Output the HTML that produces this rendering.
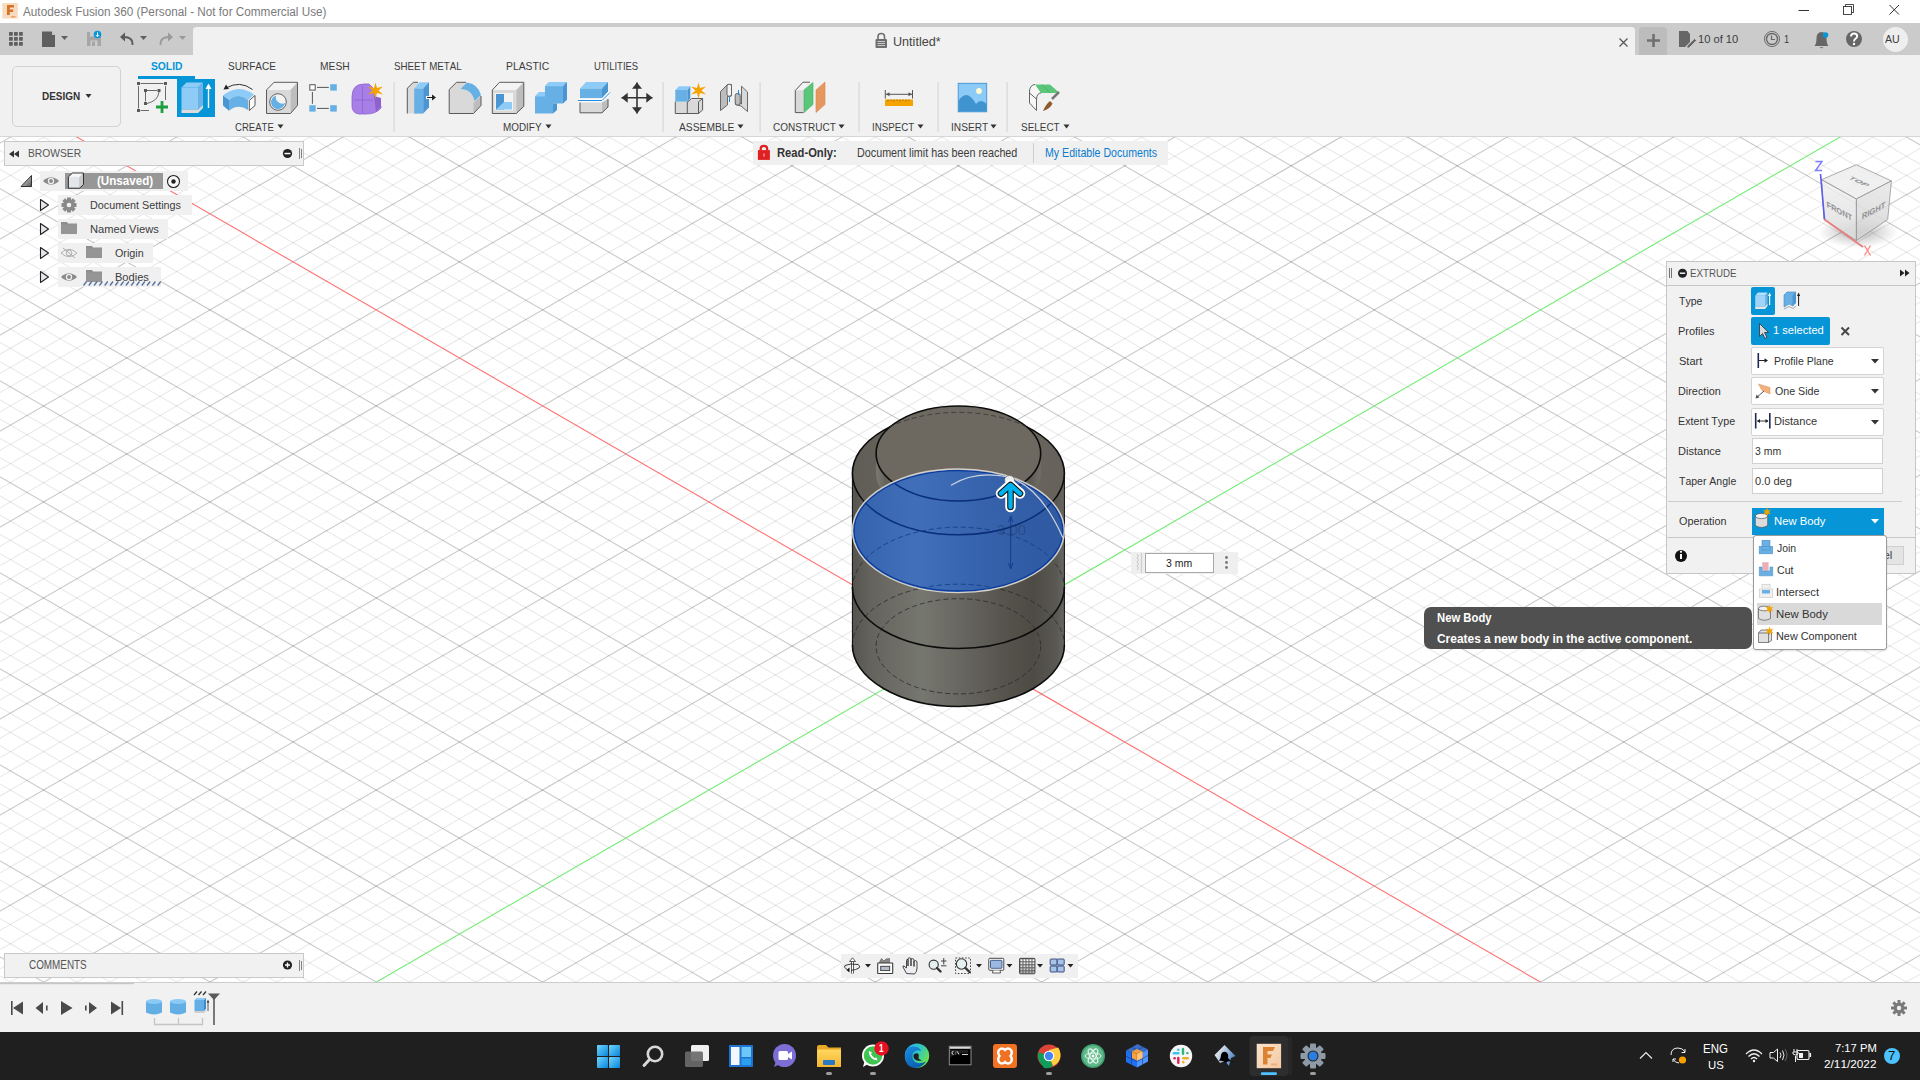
<!DOCTYPE html><html><head><meta charset="utf-8"><style>
*{margin:0;padding:0;box-sizing:border-box}
html,body{width:1920px;height:1080px;overflow:hidden;background:#fff;font-family:"Liberation Sans",sans-serif;font-kerning:none}
.abs{position:absolute}
.t{position:absolute;white-space:nowrap;line-height:1;transform-origin:0 0}
svg{position:absolute;overflow:visible}
</style></head><body><svg class="abs" style="left:0;top:137px" width="1920" height="845" viewBox="0 0 1920 845"><path d="M-2268.4 -28.8L1889.8 2372.0M-2251.7 -38.4L1906.5 2362.4M-2235.1 -48.0L1923.1 2352.8M-2218.5 -57.6L1939.7 2343.2M-2185.2 -76.8L1973.0 2324.0M-2168.6 -86.4L1989.6 2314.4M-2151.9 -96.0L2006.3 2304.8M-2135.3 -105.6L2022.9 2295.2M-2102.1 -124.8L2056.2 2276.0M-2085.4 -134.4L2072.8 2266.3M-2068.8 -144.0L2089.4 2256.7M-2052.2 -153.6L2106.1 2247.1M-2018.9 -172.8L2139.3 2227.9M-2002.3 -182.4L2156.0 2218.3M-1985.6 -192.0L2172.6 2208.7M-1969.0 -201.6L2189.2 2199.1M-1935.7 -220.8L2222.5 2179.9M-1919.1 -230.4L2239.1 2170.3M-1902.5 -240.0L2255.8 2160.7M-1885.8 -249.6L2272.4 2151.1M-1852.6 -268.8L2305.7 2131.9M-1835.9 -278.4L2322.3 2122.3M-1819.3 -288.0L2338.9 2112.7M-1802.7 -297.7L2355.6 2103.1M-1769.4 -316.9L2388.8 2083.9M-1752.8 -326.5L2405.5 2074.3M-1736.1 -336.1L2422.1 2064.7M-1719.5 -345.7L2438.7 2055.1M-1686.2 -364.9L2472.0 2035.9M-1669.6 -374.5L2488.6 2026.3M-1653.0 -384.1L2505.3 2016.7M-1636.3 -393.7L2521.9 2007.1M-1603.1 -412.9L2555.2 1987.9M-1586.4 -422.5L2571.8 1978.3M-1569.8 -432.1L2588.4 1968.7M-1553.2 -441.7L2605.1 1959.1M-1519.9 -460.9L2638.3 1939.8M-1503.3 -470.5L2655.0 1930.2M-1486.6 -480.1L2671.6 1920.6M-1470.0 -489.7L2688.2 1911.0M-1436.7 -508.9L2721.5 1891.8M-1420.1 -518.5L2738.1 1882.2M-1403.5 -528.1L2754.8 1872.6M-1386.8 -537.7L2771.4 1863.0M-1353.6 -556.9L2804.7 1843.8M-1336.9 -566.5L2821.3 1834.2M-1320.3 -576.1L2837.9 1824.6M-1303.7 -585.7L2854.5 1815.0M-1270.4 -604.9L2887.8 1795.8M-1253.8 -614.6L2904.4 1786.2M-1237.1 -624.2L2921.1 1776.6M-1220.5 -633.8L2937.7 1767.0M-1187.2 -653.0L2971.0 1747.8M-1170.6 -662.6L2987.6 1738.2M-1154.0 -672.2L3004.2 1728.6M-1137.3 -681.8L3020.9 1719.0M-1104.1 -701.0L3054.1 1699.8M-1087.4 -710.6L3070.8 1690.2M-1070.8 -720.2L3087.4 1680.6M-1054.2 -729.8L3104.0 1671.0M-1020.9 -749.0L3137.3 1651.8M-1004.3 -758.6L3153.9 1642.2M-987.6 -768.2L3170.6 1632.6M-971.0 -777.8L3187.2 1622.9M-937.7 -797.0L3220.5 1603.7M-921.1 -806.6L3237.1 1594.1M-904.5 -816.2L3253.7 1584.5M-887.9 -825.8L3270.4 1574.9M-854.6 -845.0L3303.6 1555.7M-838.0 -854.6L3320.3 1546.1M-821.3 -864.2L3336.9 1536.5M-804.7 -873.8L3353.5 1526.9M-771.4 -893.0L3386.8 1507.7M-754.8 -902.6L3403.4 1498.1M-738.2 -912.2L3420.1 1488.5M-721.5 -921.8L3436.7 1478.9M-688.3 -941.1L3470.0 1459.7M-671.6 -950.7L3486.6 1450.1M-655.0 -960.3L3503.2 1440.5M-638.4 -969.9L3519.9 1430.9M-605.1 -989.1L3553.1 1411.7M-588.5 -998.7L3569.8 1402.1M-571.8 -1008.3L3586.4 1392.5M-555.2 -1017.9L3603.0 1382.9M-521.9 -1037.1L3636.3 1363.7M-505.3 -1046.7L3652.9 1354.1M-488.7 -1056.3L3669.6 1344.5M-472.0 -1065.9L3686.2 1334.9M-438.8 -1085.1L3719.5 1315.7M-422.1 -1094.7L3736.1 1306.0M-405.5 -1104.3L3752.7 1296.4M-388.9 -1113.9L3769.4 1286.8M-355.6 -1133.1L3802.6 1267.6M-339.0 -1142.7L3819.3 1258.0M-322.3 -1152.3L3835.9 1248.4M-305.7 -1161.9L3852.5 1238.8M-272.4 -1181.1L3885.8 1219.6M-255.8 -1190.7L3902.4 1210.0M-239.2 -1200.3L3919.1 1200.4M-222.5 -1209.9L3935.7 1190.8M-189.3 -1229.1L3969.0 1171.6M-172.6 -1238.7L3985.6 1162.0M-156.0 -1248.3L4002.2 1152.4M-139.4 -1258.0L4018.9 1142.8M-106.1 -1277.2L4052.1 1123.6M-89.5 -1286.8L4068.7 1114.0M-72.8 -1296.4L4085.4 1104.4M-56.2 -1306.0L4102.0 1094.8M-22.9 -1325.2L4135.3 1075.6M-6.3 -1334.8L4151.9 1066.0M10.3 -1344.4L4168.5 1056.4M27.0 -1354.0L4185.2 1046.8" stroke="#000" stroke-opacity="0.085" stroke-width="1.1" fill="none"/><path d="M-2268.4 1046.8L1889.8 -1354.0M-2251.7 1056.4L1906.5 -1344.4M-2235.1 1066.0L1923.1 -1334.8M-2218.5 1075.6L1939.7 -1325.2M-2185.2 1094.8L1973.0 -1306.0M-2168.6 1104.4L1989.6 -1296.4M-2151.9 1114.0L2006.3 -1286.8M-2135.3 1123.6L2022.9 -1277.2M-2102.1 1142.8L2056.2 -1258.0M-2085.4 1152.4L2072.8 -1248.3M-2068.8 1162.0L2089.4 -1238.7M-2052.2 1171.6L2106.1 -1229.1M-2018.9 1190.8L2139.3 -1209.9M-2002.3 1200.4L2156.0 -1200.3M-1985.6 1210.0L2172.6 -1190.7M-1969.0 1219.6L2189.2 -1181.1M-1935.7 1238.8L2222.5 -1161.9M-1919.1 1248.4L2239.1 -1152.3M-1902.5 1258.0L2255.8 -1142.7M-1885.8 1267.6L2272.4 -1133.1M-1852.6 1286.8L2305.7 -1113.9M-1835.9 1296.4L2322.3 -1104.3M-1819.3 1306.0L2338.9 -1094.7M-1802.7 1315.7L2355.6 -1085.1M-1769.4 1334.9L2388.8 -1065.9M-1752.8 1344.5L2405.5 -1056.3M-1736.1 1354.1L2422.1 -1046.7M-1719.5 1363.7L2438.7 -1037.1M-1686.2 1382.9L2472.0 -1017.9M-1669.6 1392.5L2488.6 -1008.3M-1653.0 1402.1L2505.3 -998.7M-1636.3 1411.7L2521.9 -989.1M-1603.1 1430.9L2555.2 -969.9M-1586.4 1440.5L2571.8 -960.3M-1569.8 1450.1L2588.4 -950.7M-1553.2 1459.7L2605.1 -941.1M-1519.9 1478.9L2638.3 -921.8M-1503.3 1488.5L2655.0 -912.2M-1486.6 1498.1L2671.6 -902.6M-1470.0 1507.7L2688.2 -893.0M-1436.7 1526.9L2721.5 -873.8M-1420.1 1536.5L2738.1 -864.2M-1403.5 1546.1L2754.8 -854.6M-1386.8 1555.7L2771.4 -845.0M-1353.6 1574.9L2804.7 -825.8M-1336.9 1584.5L2821.3 -816.2M-1320.3 1594.1L2837.9 -806.6M-1303.7 1603.7L2854.5 -797.0M-1270.4 1622.9L2887.8 -777.8M-1253.8 1632.6L2904.4 -768.2M-1237.1 1642.2L2921.1 -758.6M-1220.5 1651.8L2937.7 -749.0M-1187.2 1671.0L2971.0 -729.8M-1170.6 1680.6L2987.6 -720.2M-1154.0 1690.2L3004.2 -710.6M-1137.3 1699.8L3020.9 -701.0M-1104.1 1719.0L3054.1 -681.8M-1087.4 1728.6L3070.8 -672.2M-1070.8 1738.2L3087.4 -662.6M-1054.2 1747.8L3104.0 -653.0M-1020.9 1767.0L3137.3 -633.8M-1004.3 1776.6L3153.9 -624.2M-987.6 1786.2L3170.6 -614.6M-971.0 1795.8L3187.2 -604.9M-937.7 1815.0L3220.5 -585.7M-921.1 1824.6L3237.1 -576.1M-904.5 1834.2L3253.7 -566.5M-887.9 1843.8L3270.4 -556.9M-854.6 1863.0L3303.6 -537.7M-838.0 1872.6L3320.3 -528.1M-821.3 1882.2L3336.9 -518.5M-804.7 1891.8L3353.5 -508.9M-771.4 1911.0L3386.8 -489.7M-754.8 1920.6L3403.4 -480.1M-738.2 1930.2L3420.1 -470.5M-721.5 1939.8L3436.7 -460.9M-688.3 1959.1L3470.0 -441.7M-671.6 1968.7L3486.6 -432.1M-655.0 1978.3L3503.2 -422.5M-638.4 1987.9L3519.9 -412.9M-605.1 2007.1L3553.1 -393.7M-588.5 2016.7L3569.8 -384.1M-571.8 2026.3L3586.4 -374.5M-555.2 2035.9L3603.0 -364.9M-521.9 2055.1L3636.3 -345.7M-505.3 2064.7L3652.9 -336.1M-488.7 2074.3L3669.6 -326.5M-472.0 2083.9L3686.2 -316.9M-438.8 2103.1L3719.5 -297.7M-422.1 2112.7L3736.1 -288.0M-405.5 2122.3L3752.7 -278.4M-388.9 2131.9L3769.4 -268.8M-355.6 2151.1L3802.6 -249.6M-339.0 2160.7L3819.3 -240.0M-322.3 2170.3L3835.9 -230.4M-305.7 2179.9L3852.5 -220.8M-272.4 2199.1L3885.8 -201.6M-255.8 2208.7L3902.4 -192.0M-239.2 2218.3L3919.1 -182.4M-222.5 2227.9L3935.7 -172.8M-189.3 2247.1L3969.0 -153.6M-172.6 2256.7L3985.6 -144.0M-156.0 2266.3L4002.2 -134.4M-139.4 2276.0L4018.9 -124.8M-106.1 2295.2L4052.1 -105.6M-89.5 2304.8L4068.7 -96.0M-72.8 2314.4L4085.4 -86.4M-56.2 2324.0L4102.0 -76.8M-22.9 2343.2L4135.3 -57.6M-6.3 2352.8L4151.9 -48.0M10.3 2362.4L4168.5 -38.4M27.0 2372.0L4185.2 -28.8" stroke="#000" stroke-opacity="0.085" stroke-width="1.1" fill="none"/><path d="M-2285.0 -19.2L1873.2 2381.6M-2201.8 -67.2L1956.4 2333.6M-2118.7 -115.2L2039.5 2285.6M-2035.5 -163.2L2122.7 2237.5M-1952.4 -211.2L2205.9 2189.5M-1869.2 -259.2L2289.0 2141.5M-1786.0 -307.3L2372.2 2093.5M-1702.9 -355.3L2455.4 2045.5M-1619.7 -403.3L2538.5 1997.5M-1536.5 -451.3L2621.7 1949.5M-1453.4 -499.3L2704.9 1901.4M-1370.2 -547.3L2788.0 1853.4M-1287.0 -595.3L2871.2 1805.4M-1203.9 -643.4L2954.3 1757.4M-1037.5 -739.4L3120.7 1661.4M-954.4 -787.4L3203.8 1613.3M-871.2 -835.4L3287.0 1565.3M-788.1 -883.4L3370.2 1517.3M-704.9 -931.5L3453.3 1469.3M-621.7 -979.5L3536.5 1421.3M-538.6 -1027.5L3619.7 1373.3M-455.4 -1075.5L3702.8 1325.3M-372.2 -1123.5L3786.0 1277.2M-289.1 -1171.5L3869.2 1229.2M-205.9 -1219.5L3952.3 1181.2M-122.7 -1267.6L4035.5 1133.2M-39.6 -1315.6L4118.6 1085.2M43.6 -1363.6L4201.8 1037.2" stroke="#000" stroke-opacity="0.215" stroke-width="1.1" fill="none"/><path d="M-2285.0 1037.2L1873.2 -1363.6M-2201.8 1085.2L1956.4 -1315.6M-2118.7 1133.2L2039.5 -1267.6M-2035.5 1181.2L2122.7 -1219.5M-1952.4 1229.2L2205.9 -1171.5M-1869.2 1277.2L2289.0 -1123.5M-1786.0 1325.3L2372.2 -1075.5M-1702.9 1373.3L2455.4 -1027.5M-1619.7 1421.3L2538.5 -979.5M-1536.5 1469.3L2621.7 -931.5M-1453.4 1517.3L2704.9 -883.4M-1370.2 1565.3L2788.0 -835.4M-1287.0 1613.3L2871.2 -787.4M-1203.9 1661.4L2954.3 -739.4M-1037.5 1757.4L3120.7 -643.4M-954.4 1805.4L3203.8 -595.3M-871.2 1853.4L3287.0 -547.3M-788.1 1901.4L3370.2 -499.3M-704.9 1949.5L3453.3 -451.3M-621.7 1997.5L3536.5 -403.3M-538.6 2045.5L3619.7 -355.3M-455.4 2093.5L3702.8 -307.3M-372.2 2141.5L3786.0 -259.2M-289.1 2189.5L3869.2 -211.2M-205.9 2237.5L3952.3 -163.2M-122.7 2285.6L4035.5 -115.2M-39.6 2333.6L4118.6 -67.2M43.6 2381.6L4201.8 -19.2" stroke="#000" stroke-opacity="0.215" stroke-width="1.1" fill="none"/><path d="M-1120.7 -691.4L3037.5 1709.4" stroke="#ff7070" stroke-width="1.1" fill="none"/><path d="M-1120.7 1709.4L3037.5 -691.4" stroke="#72ec72" stroke-width="1.1" fill="none"/></svg><div class="abs" style="left:0;top:0;width:1920px;height:23px;background:#fff"></div><div class="t" style="left:22.98px;top:5.22px;font-size:13.08px;font-weight:400;color:#7a7a7a;transform:scaleX(0.898);">Autodesk Fusion 360 (Personal - Not for Commercial Use)</div><div class="abs" style="left:0;top:23px;width:1920px;height:32px;background:#cbcbcb"></div><div class="abs" style="left:193px;top:27px;width:1442px;height:28px;background:#f1f1f1;border-radius:3.5px 3.5px 0 0"></div><div class="abs" style="left:1639px;top:27px;width:28px;height:28px;background:#bcbcbc;border-radius:4px 4px 0 0"></div><div class="t" style="left:893.03px;top:36.35px;font-size:12.94px;font-weight:400;color:#444;transform:scaleX(0.973);">Untitled*</div><div class="t" style="left:1698.15px;top:33.70px;font-size:11.34px;font-weight:400;color:#3c3c3c;transform:scaleX(0.983);">10 of 10</div><div class="t" style="left:1784.29px;top:33.70px;font-size:11.34px;font-weight:400;color:#3c3c3c;transform:scaleX(0.818);">1</div><div class="abs" style="left:1882.5px;top:26.5px;width:25px;height:25px;border-radius:50%;background:#eeeeee"></div><div class="t" style="left:1885.28px;top:33.70px;font-size:11.34px;font-weight:400;color:#3c3c3c;transform:scaleX(0.936);">AU</div><div class="abs" style="left:0;top:55px;width:1920px;height:82px;background:#f1f1f1;border-bottom:1px solid #d6d6d6"></div><div class="abs" style="left:12px;top:65.5px;width:109px;height:61px;border:1px solid #d2d2d2;border-radius:5px"></div><div class="t" style="left:41.73px;top:91.07px;font-size:10.90px;font-weight:700;color:#333;transform:scaleX(0.915);">DESIGN</div><div class="t" style="left:150.95px;top:60.58px;font-size:11.48px;font-weight:700;color:#0696d7;transform:scaleX(0.897);">SOLID</div><div class="t" style="left:227.54px;top:60.58px;font-size:11.48px;font-weight:400;color:#3c3c3c;transform:scaleX(0.873);">SURFACE</div><div class="t" style="left:320.16px;top:60.58px;font-size:11.48px;font-weight:400;color:#3c3c3c;transform:scaleX(0.895);">MESH</div><div class="t" style="left:393.56px;top:60.58px;font-size:11.48px;font-weight:400;color:#3c3c3c;transform:scaleX(0.850);">SHEET METAL</div><div class="t" style="left:506.15px;top:60.58px;font-size:11.48px;font-weight:400;color:#3c3c3c;transform:scaleX(0.904);">PLASTIC</div><div class="t" style="left:594.27px;top:60.58px;font-size:11.48px;font-weight:400;color:#3c3c3c;transform:scaleX(0.824);">UTILITIES</div><div class="abs" style="left:138px;top:76px;width:57px;height:3px;background:#0696d7"></div><div class="t" style="left:235.01px;top:121.95px;font-size:11.05px;font-weight:400;color:#3c3c3c;transform:scaleX(0.866);">CREATE</div><div class="t" style="left:502.69px;top:121.95px;font-size:11.05px;font-weight:400;color:#3c3c3c;transform:scaleX(0.897);">MODIFY</div><div class="t" style="left:678.98px;top:121.95px;font-size:11.05px;font-weight:400;color:#3c3c3c;transform:scaleX(0.931);">ASSEMBLE</div><div class="t" style="left:773.49px;top:121.95px;font-size:11.05px;font-weight:400;color:#3c3c3c;transform:scaleX(0.905);">CONSTRUCT</div><div class="t" style="left:872.10px;top:121.95px;font-size:11.05px;font-weight:400;color:#3c3c3c;transform:scaleX(0.880);">INSPECT</div><div class="t" style="left:951.06px;top:121.95px;font-size:11.05px;font-weight:400;color:#3c3c3c;transform:scaleX(0.918);">INSERT</div><div class="t" style="left:1020.55px;top:121.95px;font-size:11.05px;font-weight:400;color:#3c3c3c;transform:scaleX(0.900);">SELECT</div><div class="abs" style="left:0;top:982px;width:1920px;height:50px;background:#f1f1f1;border-top:1px solid #cdcdcd"></div><div class="abs" style="left:0;top:1032px;width:1920px;height:48px;background:#1f1f1f"></div><div class="t" style="left:1703.46px;top:1043.09px;font-size:12.06px;font-weight:400;color:#fff;transform:scaleX(0.953);">ENG</div><div class="t" style="left:1707.72px;top:1059.33px;font-size:11.77px;font-weight:400;color:#fff;transform:scaleX(0.966);">US</div><div class="t" style="left:1835.42px;top:1042.58px;font-size:11.48px;font-weight:400;color:#fff;transform:scaleX(0.977);">7:17 PM</div><div class="t" style="left:1824.41px;top:1058.33px;font-size:11.77px;font-weight:400;color:#fff;transform:scaleX(1.002);">2/11/2022</div><div class="abs" style="left:4px;top:141px;width:300px;height:25px;background:#f1f1f1;border:1px solid #c9c9c9"></div><div class="t" style="left:28.36px;top:147.45px;font-size:11.63px;font-weight:400;color:#555;transform:scaleX(0.884);">BROWSER</div><svg style="left:0;top:0" width="1" height="1"><path d="M9 154l5-3.5v7zM14 154l5-3.5v7z" fill="#333"/><circle cx="287.5" cy="153.5" r="4.6" fill="#222"/><rect x="284.5" y="152.8" width="6" height="1.5" fill="#fff"/><path d="M299.5 148v11M301.5 149v9" stroke="#666" stroke-width="0.8"/></svg><div class="abs" style="left:40px;top:171px;width:148px;height:20px;background:#f0f0f0"></div><div class="abs" style="left:65px;top:173px;width:98px;height:16px;background:#979797"></div><div class="t" style="left:97.42px;top:174.84px;font-size:12.35px;font-weight:700;color:#fff;transform:scaleX(0.940);">(Unsaved)</div><div class="abs" style="left:58px;top:195px;width:134px;height:20px;background:#f0f0f0"></div><div class="abs" style="left:58px;top:219px;width:110px;height:20px;background:#f0f0f0"></div><div class="abs" style="left:58px;top:243px;width:95px;height:20px;background:#f0f0f0"></div><div class="abs" style="left:58px;top:267px;width:103px;height:20px;background:#f0f0f0"></div><div class="t" style="left:89.92px;top:199.45px;font-size:11.63px;font-weight:400;color:#3c3c3c;transform:scaleX(0.926);">Document Settings</div><div class="t" style="left:90.38px;top:223.45px;font-size:11.63px;font-weight:400;color:#3c3c3c;transform:scaleX(0.959);">Named Views</div><div class="t" style="left:115.49px;top:247.45px;font-size:11.63px;font-weight:400;color:#3c3c3c;transform:scaleX(0.926);">Origin</div><div class="t" style="left:115.09px;top:271.45px;font-size:11.63px;font-weight:400;color:#3c3c3c;transform:scaleX(0.951);">Bodies</div><div class="abs" style="left:4px;top:953px;width:300px;height:25px;background:#f1f1f1;border:1px solid #c9c9c9"></div><div class="t" style="left:28.80px;top:958.96px;font-size:12.21px;font-weight:400;color:#555;transform:scaleX(0.810);">COMMENTS</div><svg style="left:0;top:0" width="1" height="1"><circle cx="287.5" cy="965" r="4.6" fill="#222"/><path d="M285 965h5M287.5 962.5v5" stroke="#fff" stroke-width="1.4"/><path d="M299.5 960v11M301.5 961v9" stroke="#666" stroke-width="0.8"/></svg><div class="abs" style="left:753px;top:141px;width:415px;height:24px;background:#f0f0f0"></div><div class="abs" style="left:1032.5px;top:143px;width:1px;height:20px;background:#cfcfcf"></div><div class="t" style="left:777.25px;top:146.84px;font-size:12.35px;font-weight:700;color:#333;transform:scaleX(0.908);">Read-Only:</div><div class="t" style="left:857.12px;top:146.84px;font-size:12.35px;font-weight:400;color:#3c3c3c;transform:scaleX(0.872);">Document limit has been reached</div><div class="t" style="left:1045.13px;top:146.84px;font-size:12.35px;font-weight:400;color:#0a7ccf;transform:scaleX(0.860);">My Editable Documents</div><div class="abs" style="left:1666px;top:261px;width:250px;height:313px;background:#f1f1f1;border:1px solid #c6c6c6"></div><div class="abs" style="left:1667px;top:285px;width:248px;height:1px;background:#c6c6c6"></div><div class="t" style="left:1690.30px;top:267.70px;font-size:11.34px;font-weight:400;color:#555;transform:scaleX(0.857);">EXTRUDE</div><div class="t" style="left:1678.96px;top:295.82px;font-size:11.19px;font-weight:400;color:#333;transform:scaleX(0.941);">Type</div><div class="t" style="left:1678.30px;top:325.70px;font-size:11.34px;font-weight:400;color:#333;transform:scaleX(0.968);">Profiles</div><div class="t" style="left:1678.70px;top:355.58px;font-size:11.48px;font-weight:400;color:#333;transform:scaleX(0.964);">Start</div><div class="t" style="left:1678.31px;top:385.45px;font-size:11.63px;font-weight:400;color:#333;transform:scaleX(0.933);">Direction</div><div class="t" style="left:1678.32px;top:415.33px;font-size:11.77px;font-weight:400;color:#333;transform:scaleX(0.910);">Extent Type</div><div class="t" style="left:1678.29px;top:445.45px;font-size:11.63px;font-weight:400;color:#333;transform:scaleX(0.950);">Distance</div><div class="t" style="left:1678.96px;top:475.33px;font-size:11.77px;font-weight:400;color:#333;transform:scaleX(0.893);">Taper Angle</div><div class="t" style="left:1678.69px;top:515.45px;font-size:11.63px;font-weight:400;color:#333;transform:scaleX(0.930);">Operation</div><div class="abs" style="left:1751px;top:287px;width:24px;height:28px;background:#0696d7;border-radius:2px"></div><div class="abs" style="left:1751px;top:317px;width:79px;height:28px;background:#0696d7;border-radius:2px"></div><div class="t" style="left:1772.95px;top:324.45px;font-size:11.63px;font-weight:400;color:#fff;transform:scaleX(0.958);">1 selected</div><div class="abs" style="left:1751px;top:347px;width:133px;height:28px;background:#fff;border:1px solid #d4d4d4;border-radius:2px"></div><svg style="left:0;top:0" width="1" height="1"><path d="M1871 359h8l-4 4.5z" fill="#333"/></svg><div class="abs" style="left:1751px;top:377px;width:133px;height:28px;background:#fff;border:1px solid #d4d4d4;border-radius:2px"></div><svg style="left:0;top:0" width="1" height="1"><path d="M1871 389h8l-4 4.5z" fill="#333"/></svg><div class="abs" style="left:1751px;top:408px;width:133px;height:28px;background:#fff;border:1px solid #d4d4d4;border-radius:2px"></div><svg style="left:0;top:0" width="1" height="1"><path d="M1871 420h8l-4 4.5z" fill="#333"/></svg><div class="abs" style="left:1752px;top:438px;width:131px;height:26px;background:#fff;border:1px solid #d0d0d0"></div><div class="abs" style="left:1752px;top:468px;width:131px;height:26px;background:#fff;border:1px solid #d0d0d0"></div><div class="t" style="left:1774.44px;top:355.58px;font-size:11.48px;font-weight:400;color:#333;transform:scaleX(0.916);">Profile Plane</div><div class="t" style="left:1774.79px;top:385.45px;font-size:11.63px;font-weight:400;color:#333;transform:scaleX(0.917);">One Side</div><div class="t" style="left:1774.09px;top:415.33px;font-size:11.77px;font-weight:400;color:#333;transform:scaleX(0.941);">Distance</div><div class="t" style="left:1754.60px;top:445.45px;font-size:11.63px;font-weight:400;color:#333;transform:scaleX(0.897);">3 mm</div><div class="t" style="left:1754.57px;top:475.33px;font-size:11.77px;font-weight:400;color:#333;transform:scaleX(0.941);">0.0 deg</div><div class="abs" style="left:1668px;top:501px;width:234px;height:1px;background:#cdcdcd"></div><div class="abs" style="left:1751.5px;top:507.5px;width:132px;height:27px;background:#0696d7"></div><div class="t" style="left:1774.37px;top:515.45px;font-size:11.63px;font-weight:400;color:#fff;transform:scaleX(0.971);">New Body</div><svg style="left:0;top:0" width="1" height="1"><path d="M1871 519h8l-4 4.5z" fill="#fff"/></svg><div class="abs" style="left:1667px;top:537px;width:248px;height:1px;background:#c9c9c9"></div><div class="abs" style="left:1840px;top:546px;width:64px;height:19px;background:#e4e4e4;border:1px solid #cfcfcf"></div><div class="t" style="left:1857.42px;top:549.45px;font-size:11.63px;font-weight:400;color:#444;transform:scaleX(0.976);">Cancel</div><svg style="left:0;top:0" width="1" height="1"><circle cx="1681" cy="556" r="6" fill="#111"/><rect x="1680" y="554" width="2" height="5" fill="#fff"/><circle cx="1681" cy="551.8" r="1.1" fill="#fff"/></svg><div class="abs" style="left:1752.5px;top:534.5px;width:134px;height:115px;background:#fff;border:1px solid #9a9a9a;border-radius:3px;box-shadow:0 1px 2px rgba(0,0,0,0.12)"></div><div class="abs" style="left:1757px;top:603px;width:125px;height:22px;background:#d9d9d9"></div><div class="t" style="left:1776.94px;top:542.45px;font-size:11.63px;font-weight:400;color:#333;transform:scaleX(0.897);">Join</div><div class="t" style="left:1776.56px;top:564.45px;font-size:11.63px;font-weight:400;color:#333;transform:scaleX(0.913);">Cut</div><div class="t" style="left:1776.06px;top:586.45px;font-size:11.63px;font-weight:400;color:#333;transform:scaleX(0.965);">Intersect</div><div class="t" style="left:1776.17px;top:608.45px;font-size:11.63px;font-weight:400;color:#333;transform:scaleX(0.978);">New Body</div><div class="t" style="left:1776.21px;top:630.45px;font-size:11.63px;font-weight:400;color:#333;transform:scaleX(0.934);">New Component</div><div class="abs" style="left:1424px;top:607px;width:328px;height:42px;background:#505050;border-radius:7px"></div><div class="t" style="left:1437.14px;top:611.84px;font-size:12.35px;font-weight:700;color:#fff;transform:scaleX(0.915);">New Body</div><div class="t" style="left:1437.41px;top:632.72px;font-size:12.50px;font-weight:700;color:#fff;transform:scaleX(0.955);">Creates a new body in the active component.</div><div class="abs" style="left:1131px;top:552px;width:107px;height:21.5px;background:#efefef"></div><div class="abs" style="left:1145px;top:553px;width:69px;height:20px;background:#fff;border:1px solid #a9a9a9"></div><div class="t" style="left:1165.60px;top:557.82px;font-size:11.19px;font-weight:400;color:#222;transform:scaleX(0.936);">3 mm</div><svg style="left:0;top:0" width="1" height="1"><circle cx="1226.5" cy="557.5" r="1.4" fill="#777"/><circle cx="1226.5" cy="562.5" r="1.4" fill="#777"/><circle cx="1226.5" cy="567.5" r="1.4" fill="#777"/><path d="M1141.5 553v20" stroke="#d0d0d0" stroke-width="1.5"/><path d="M1137 554l1.5 2-1.5 2 1.5 2-1.5 2 1.5 2-1.5 2 1.5 2-1.5 2" stroke="#aaa" stroke-width="0.6" fill="none"/></svg><div class="abs" style="left:841px;top:954px;width:237px;height:23.5px;background:#f0f0f0"></div><svg style="left:0;top:0" width="1920" height="1080" viewBox="0 0 1920 1080"><defs><linearGradient id="side" x1="852" x2="1065" y1="0" y2="0" gradientUnits="userSpaceOnUse"><stop offset="0" stop-color="#55534d"/><stop offset="0.08" stop-color="#64625c"/><stop offset="0.33" stop-color="#76776f"/><stop offset="0.52" stop-color="#67655f"/><stop offset="0.72" stop-color="#56534d"/><stop offset="0.85" stop-color="#4e4b45"/><stop offset="0.96" stop-color="#5a5852"/><stop offset="1" stop-color="#6a6862"/></linearGradient><linearGradient id="blue" x1="852" x2="1065" y1="0" y2="0" gradientUnits="userSpaceOnUse"><stop offset="0" stop-color="#3063b6"/><stop offset="0.3" stop-color="#3c6fc2"/><stop offset="0.6" stop-color="#3163b5"/><stop offset="1" stop-color="#2a5aab"/></linearGradient><linearGradient id="topf" x1="852" x2="1065" y1="0" y2="0" gradientUnits="userSpaceOnUse"><stop offset="0" stop-color="#605d56"/><stop offset="0.5" stop-color="#6e6a62"/><stop offset="1" stop-color="#66625b"/></linearGradient><linearGradient id="wall" x1="876" x2="1041" y1="0" y2="0" gradientUnits="userSpaceOnUse"><stop offset="0" stop-color="#7c7a72"/><stop offset="0.06" stop-color="#66635c"/><stop offset="0.5" stop-color="#6d6961"/><stop offset="0.94" stop-color="#5e5b55"/><stop offset="1" stop-color="#747069"/></linearGradient></defs><path d="M852.4 473.6V645A106.0 61.5 0 0 0 1064.4 645V473.6Z" fill="url(#side)"/><ellipse cx="958.4" cy="473.6" rx="106.0" ry="61.2" fill="url(#topf)"/><path d="M876.1 453.5V473.6A82.3 47.5 0 0 0 1040.7 473.6V453.5Z" fill="url(#wall)"/><g fill="none" stroke="#2a2a2a" stroke-width="0.8" stroke-dasharray="5 3"><ellipse cx="958.4" cy="646.3" rx="82.3" ry="47.6"/><path d="M852.4 645.5A106.0 61.3 0 0 1 1064.4 645.5"/><path d="M852.4 588.5A106.0 61.3 0 0 1 1064.4 588.5"/></g><g fill="none" stroke="#0c0c0c" stroke-width="1.6"><path d="M852.4 645A106.0 61.5 0 0 0 1064.4 645"/><path d="M852.4 587A106.0 61.5 0 0 0 1064.4 587"/><path d="M852.4 473.6V645M1064.4 473.6V645" stroke-width="1"/><ellipse cx="958.4" cy="473.6" rx="106.0" ry="61.2"/></g><ellipse cx="958.4" cy="453.5" rx="82.3" ry="47.5" fill="#6d6961" stroke="#0c0c0c" stroke-width="1.6"/><path d="M889.4 427.1A106.0 61.2 0 0 1 1027.4 427.1" fill="none" stroke="#333" stroke-width="0.8" stroke-dasharray="5 3"/><clipPath id="bclip"><ellipse cx="958.4" cy="530.8" rx="105.2" ry="61"/></clipPath><ellipse cx="958.4" cy="530.8" rx="106.0" ry="61.8" fill="url(#blue)" fill-opacity="0.9"/><g clip-path="url(#bclip)" fill="none"><path d="M852.4 473.6A106.0 61.2 0 0 0 1064.4 473.6" stroke="#0a2f78" stroke-width="1.5"/><path d="M876.1 453.5A82.3 47.5 0 0 0 1040.7 453.5" stroke="#0a2f78" stroke-width="1.5"/><path d="M852.4 588.5A106.0 61.3 0 0 1 1064.4 588.5" stroke="#143e88" stroke-width="0.8" stroke-dasharray="5 3"/><path d="M852.4 645.5A106.0 61.3 0 0 1 1064.4 645.5" stroke="#143e88" stroke-width="0.8" stroke-dasharray="5 3"/><ellipse cx="958.4" cy="530.8" rx="104.4" ry="60.2" stroke="#0b3c9c" stroke-width="1.3"/></g><ellipse cx="958.4" cy="530.8" rx="106.0" ry="61.8" fill="none" stroke="#d6d0c8" stroke-width="1.4"/><path d="M951 485.3Q975 470 1008 477Q1040 486 1063 538" fill="none" stroke="#e8e8e8" stroke-width="1.2" opacity="0.85"/><path d="M1010.7 516V569M1008.5 522l2.2-6 2.2 6M1008.5 563l2.2 6 2.2-6" fill="none" stroke="#0e3a8a" stroke-width="0.9"/></svg><div class="t" style="left:996.83px;top:522.75px;font-size:14.83px;font-weight:400;color:rgba(30,55,100,0.45);transform:scaleX(1.003);">3.00</div><svg style="left:0;top:0" width="1" height="1"><ellipse cx="1009.5" cy="480" rx="5" ry="4.5" fill="#ececec" stroke="#555" stroke-width="0.6"/><path d="M1001 493.5L1010.5 485L1020 493.5M1010.5 486V507" fill="none" stroke="#fff" stroke-width="10.5" stroke-linecap="round" stroke-linejoin="round"/><path d="M1001 493.5L1010.5 485L1020 493.5M1010.5 486V507" fill="none" stroke="#111" stroke-width="6.6" stroke-linecap="round" stroke-linejoin="round"/><path d="M1001 493.5L1010.5 485L1020 493.5M1010.5 486V507" fill="none" stroke="#00b1ee" stroke-width="4.4" stroke-linecap="round" stroke-linejoin="round"/></svg><svg style="left:0;top:0" width="1" height="1"><rect x="393.5" y="82" width="1.2" height="50" fill="#d8d8d8"/><rect x="662.5" y="82" width="1.2" height="50" fill="#d8d8d8"/><rect x="759.5" y="82" width="1.2" height="50" fill="#d8d8d8"/><rect x="858.5" y="82" width="1.2" height="50" fill="#d8d8d8"/><rect x="937.5" y="82" width="1.2" height="50" fill="#d8d8d8"/><rect x="1006.5" y="82" width="1.2" height="50" fill="#d8d8d8"/><g fill="#5a5a5a"><rect x="137" y="82" width="3" height="3"/><rect x="164" y="82" width="3" height="3"/><rect x="137" y="109" width="3" height="3"/><rect x="144" y="89" width="3" height="3"/><rect x="157.5" y="89" width="3" height="3"/><rect x="144" y="102" width="3" height="3"/></g><path d="M140.5 83.5H163.5M138.5 86V108.5M140.5 110.5H149M165.5 86V100M147 90.5H157M145.5 92V101.5M159 92Q158 101 147 103.5" fill="none" stroke="#5a5a5a" stroke-width="0.9"/><path d="M162 101V113M156 107H168" stroke="#1f9e3f" stroke-width="2.8"/><rect x="177" y="79" width="38" height="38" fill="#0696d7"/><path d="M181.5 87.5L186.5 82.5H203L198 87.5Z" fill="#8ecbf6"/><rect x="181.5" y="87.5" width="16.5" height="22" fill="#8ecbf6"/><path d="M198 87.5L203 82.5V105L198 109.5Z" fill="#6bb2e6"/><path d="M181.5 109.5H198L203 105V108L198 113H181.5Z" fill="#dcdcdc"/><path d="M208.5 108V85" stroke="#fff" stroke-width="1.4"/><path d="M205.5 89L208.5 83.5L211.5 89Z" fill="#fff"/><path d="M252.5 89.5Q240 80 226 88" fill="none" stroke="#333" stroke-width="1"/><path d="M223.5 89.5L226 84.5L229 89Z" fill="#222"/><path d="M223 95.5Q238 83 254 94.5L248 100Q238 92 229 100Z" fill="#8ecbf6"/><path d="M229 100Q238 92 248 100V110Q238 103 229 110.8Z" fill="#67b0e5"/><path d="M223 95.5L229 100V110.8L223 105.5Z" fill="#4a95d2"/><path d="M249.3 100.5L255 95.5V105.5L249.3 110.5Z" fill="#fff" stroke="#444" stroke-width="0.9"/><path d="M266.5 90L274 82.3H297.5L290.5 90Z" fill="#f3f3f3"/><rect x="266.5" y="90" width="24" height="23.5" fill="#d9d9d9"/><path d="M290.5 90L297.5 82.3V105.5L290.5 113.5Z" fill="#bdbdbd"/><path d="M266.5 113.5V90L274 82.3H297.5V105.5L290.5 113.5Z" fill="none" stroke="#5a5a5a" stroke-width="1"/><circle cx="278" cy="102" r="8.3" fill="#f3f3f3" stroke="#555" stroke-width="0.9"/><path d="M276 95.5A7 7 0 1 0 285 103A6.5 6.5 0 0 1 276 95.5Z" fill="#67b0e5"/><rect x="309.8" y="84.7" width="5.4" height="5.4" fill="#fff" stroke="#555" stroke-width="1"/><g fill="#67b0e5"><rect x="330.2" y="84.2" width="6.6" height="6.4"/><rect x="309.3" y="105.2" width="6.4" height="6.4"/><rect x="330.2" y="105.2" width="6.6" height="6.4"/></g><path d="M317 87.4H328.8M312.4 92V103.8M317 108.4H328.8" stroke="#555" stroke-width="1"/><path d="M352 97Q352 84 364 84H369L375 90V100Q382 105 381 108Q376 114 366 114H359Q352 113 352 106Z" fill="#a87fe6" stroke="#8e62cc" stroke-width="0.8"/><path d="M354 100H373M362.5 86V113" stroke="#8a5fc8" stroke-width="0.7"/><path d="M374 96L381 98V106L376 112Z" fill="#8e62cc"/><path d="M375.5 82.5L377 88L383 86.5L378.5 90.5L383 94.5L377 93L375.5 98.5L374 93L368 94.5L372.5 90.5L368 86.5L374 88Z" fill="#f5a300"/><path d="M407.3 113.5V88.2L413.4 82.3H418V113.5Z" fill="#d9d9d9"/><path d="M407.3 113.5V88.2L413.4 82.3H418" fill="none" stroke="#5a5a5a" stroke-width="1"/><path d="M414.2 88.5L419.6 82.3H429L423.2 88.5Z" fill="#8ecbf6"/><rect x="414.2" y="88.5" width="9" height="25.1" fill="#67b0e5"/><path d="M423.2 88.5L429 82.3V107.3L423.2 113.6Z" fill="#4a95d2"/><path d="M426 97.5H433" stroke="#fff" stroke-width="3"/><path d="M427 97.5H433" stroke="#222" stroke-width="1.1"/><path d="M432 94.5L436 97.5L432 100.5Z" fill="#222"/><path d="M449.2 113.5V89.5L456.6 82.3H466L481 95.5V105.5L473.5 113.5Z" fill="#d9d9d9"/><path d="M473.5 113.5L481 105.5V96L473.5 103Z" fill="#bdbdbd"/><path d="M460.5 89Q472 89 474.5 101L481 95Q478 84 467 82.5Z" fill="#67b0e5"/><path d="M449.2 113.5V89.5L456.6 82.3H466M473.5 113.5L481 105.5V96M449.2 113.5H473.5" fill="none" stroke="#5a5a5a" stroke-width="1"/><path d="M492.3 90L499.5 82.3H523.8L516.3 90Z" fill="#f3f3f3"/><rect x="492.3" y="90" width="24" height="23.5" fill="#d9d9d9"/><path d="M516.3 90L523.8 82.3V106.3L516.3 113.5Z" fill="#bdbdbd"/><path d="M492.3 113.5V90L499.5 82.3H523.8V106.3L516.3 113.5Z" fill="none" stroke="#5a5a5a" stroke-width="1"/><rect x="494.5" y="93" width="18.5" height="17.5" fill="#f3f3f3"/><rect x="496" y="94" width="8" height="15.5" fill="#4a95d2"/><path d="M496 109.5L504 102H512V109.5Z" fill="#8ecbf6"/><path d="M535 96.5L539 92.2H545V86.2L549 82H567L563 86.2V103.6H553V113.6H535Z" fill="#67b0e5"/><path d="M545 86.2L549 82H567L563 86.2Z" fill="#8ecbf6"/><path d="M535 96.5L539 92.2H545V96.5Z" fill="#8ecbf6"/><path d="M563 86.2L567 82V99.7L563 103.6Z" fill="#4a95d2"/><path d="M553 103.6H557V110L553 113.6Z" fill="#4a95d2"/><path d="M580 88.5L586 82H608L602 88.5Z" fill="#8ecbf6"/><rect x="580" y="88.5" width="22" height="9.5" fill="#67b0e5"/><path d="M602 88.5L608 82V91.5L602 98Z" fill="#4a95d2"/><path d="M578 100.5H602L610 92.5" fill="none" stroke="#fff" stroke-width="2.5"/><path d="M578 100.5H602L610 92.5" fill="none" stroke="#1e88e5" stroke-width="1"/><path d="M580 102.5H602V112.8H580Z" fill="#d9d9d9"/><path d="M602 102.5L608 99V107L602 112.8Z" fill="#bdbdbd"/><path d="M580 102.5V112.8H602L608 107V99" fill="none" stroke="#5a5a5a" stroke-width="1"/><path d="M621.5 97.7H652.5M637 82.5V113.5" stroke="#333" stroke-width="1.6"/><path d="M637 82.5L632 88.7H642ZM637 113.5L632 107.3H642ZM621.5 97.7L627.7 92.7V102.7ZM652.5 97.7L646.3 92.7V102.7Z" fill="#333"/><path d="M675.3 101.6V113.5H698.5L702.6 110V99.5H687.3V101.6Z" fill="#d9d9d9"/><path d="M675.3 101.6V113.5H698.5L702.6 110V98.5H691.5L687.3 102.3M687.3 101.6V113.5M698.5 113.5V101.8L702.6 98.5" fill="none" stroke="#5a5a5a" stroke-width="1"/><path d="M675.3 90L679 86.2H690.3L687.5 90Z" fill="#8ecbf6"/><rect x="675.3" y="90" width="12.2" height="11.6" fill="#67b0e5"/><path d="M687.5 90L690.3 86.2V98L687.5 101.6Z" fill="#4a95d2"/><path d="M698.5 82.5L700 88L706 86.5L701.5 90.5L706 94.5L700 93L698.5 98.5L697 93L691 94.5L695.5 90.5L691 86.5L697 88Z" fill="#f5a300"/><path d="M720.5 110.5V91.5L727.5 84.5H731.5V96L727.5 96.5V105Z" fill="#bdbdbd" stroke="#5a5a5a" stroke-width="0.9"/><rect x="727" y="84.2" width="4.5" height="12" rx="2" fill="#f3f3f3" stroke="#5a5a5a" stroke-width="0.9"/><path d="M747.5 111.5V92L741.5 86.2V104L735.5 100.5V104.5L741 106Z" fill="#d9d9d9" stroke="#5a5a5a" stroke-width="0.9"/><rect x="735.2" y="93.5" width="5" height="11.5" rx="2" fill="#bdbdbd" stroke="#5a5a5a" stroke-width="0.9"/><path d="M729.5 97V102M738.5 90V95" stroke="#1e88e5" stroke-width="1"/><path d="M795.3 112.6V90.5L803 82.2H810L804 90V112.6Z" fill="#d9d9d9"/><path d="M795.3 90.5L803 82.2H810L804 90Z" fill="#f3f3f3"/><path d="M803.5 112.6H795.3V90.5L803 82.2H810" fill="none" stroke="#5a5a5a" stroke-width="1"/><path d="M804 90L813 82.5V104.5L804 112.5Z" fill="#5ac67a" stroke="#3fae5f" stroke-width="0.6"/><path d="M816 90L825 82V104.5L816 112.5Z" fill="#e6965f" stroke="#d9874f" stroke-width="0.6"/><rect x="885" y="99.5" width="28" height="6.5" fill="#f5a300"/><path d="M888 99.5V101.5M891 99.5V101M894 99.5V101.5M897 99.5V101M900 99.5V101.5M903 99.5V101M906 99.5V101.5M909 99.5V101" stroke="#8a5a00" stroke-width="0.7"/><path d="M885.3 90V98.5M912.5 90V98.5M886 94.3H912" stroke="#555" stroke-width="1"/><path d="M886 94.3L889.5 92.3V96.3ZM912 94.3L908.5 92.3V96.3Z" fill="#555"/><rect x="958.2" y="83.3" width="28.5" height="28.5" fill="#8ccbf8" stroke="#3f93d2" stroke-width="0.9"/><path d="M958.5 101Q961 96 966 95Q971 95 976 104Q978 101 981 101Q984 101 986.5 104V111.5H958.5Z" fill="#3f93cf"/><circle cx="979" cy="91" r="2.9" fill="#fffbd2"/><path d="M1029.5 89.5Q1031 84 1035 84H1050L1059.5 93H1041Q1037 93 1036.5 99V110L1029.5 103Z" fill="#f7f7f7"/><path d="M1033.5 84.5H1050L1059.5 93H1041L1035 84.5Z" fill="#5ac67a"/><path d="M1041.5 84.5L1050.5 93" stroke="#3fae5f" stroke-width="0.7"/><path d="M1041 93Q1037 93 1036.5 99V110.5L1029.5 103V91Q1030 85 1035 84.5M1036.5 99L1029.5 93" fill="none" stroke="#555" stroke-width="0.9"/><path d="M1052 99L1059 92" stroke="#777" stroke-width="2.5"/><path d="M1043 111Q1046 104 1050 101L1052.5 103.5Q1050 109 1043 111Z" fill="#8e5a2a"/></svg><svg style="left:0;top:0" width="1" height="1"><g fill="#333"><path d="M85.5 94h6l-3 4z"/><path d="M277.5 124.5h6l-3 4z"/><path d="M545.5 124.5h6l-3 4z"/><path d="M737.5 124.5h6l-3 4z"/><path d="M838.5 124.5h6l-3 4z"/><path d="M917.5 124.5h6l-3 4z"/><path d="M990.5 124.5h6l-3 4z"/><path d="M1063.5 124.5h6l-3 4z"/></g></svg><svg style="left:0;top:0" width="1" height="1"><rect x="2.3" y="3" width="15.5" height="15.5" fill="#f8dbbf"/><path d="M7 5H14V7.5H9.8V9.6H13.2V12H9.8V15H7Z" fill="#d47428"/><rect x="11" y="16" width="4.5" height="1.6" fill="#eba46a"/><path d="M1798.5 10.5H1809" stroke="#333" stroke-width="1"/><rect x="1843.5" y="6.5" width="8" height="8" fill="none" stroke="#333" stroke-width="0.9"/><path d="M1845.5 6.5V4.5H1853.5V12.5H1851.5" fill="none" stroke="#333" stroke-width="0.9"/><path d="M1889.5 5L1899 14.5M1899 5L1889.5 14.5" stroke="#333" stroke-width="1"/></svg><svg style="left:0;top:0" width="1" height="1"><g fill="#5f5f5f"><rect x="9" y="32" width="3.8" height="3.8" rx="0.5"/><rect x="9" y="37" width="3.8" height="3.8" rx="0.5"/><rect x="9" y="42" width="3.8" height="3.8" rx="0.5"/><rect x="14" y="32" width="3.8" height="3.8" rx="0.5"/><rect x="14" y="37" width="3.8" height="3.8" rx="0.5"/><rect x="14" y="42" width="3.8" height="3.8" rx="0.5"/><rect x="19" y="32" width="3.8" height="3.8" rx="0.5"/><rect x="19" y="37" width="3.8" height="3.8" rx="0.5"/><rect x="19" y="42" width="3.8" height="3.8" rx="0.5"/><path d="M42 31.5H51.5L55 35V47H42Z"/><path d="M52 31.5V35H55" fill="#cbcbcb"/><path d="M61 36h7l-3.5 4z"/><path d="M140 36h7l-3.5 4z"/></g><path d="M87 32H99L101 34V46H87Z" fill="#a6a6a6"/><rect x="90" y="32" width="6" height="4.5" fill="#cbcbcb"/><rect x="90.5" y="40.5" width="7" height="5.5" fill="#cbcbcb"/><rect x="92" y="41.5" width="3" height="4.5" fill="#a6a6a6"/><circle cx="97.5" cy="34.5" r="3.8" fill="#0696d7"/><path d="M97.5 32.3V36.3M95.8 35L97.5 36.8L99.2 35" stroke="#fff" stroke-width="0.9" fill="none"/><path d="M132.5 45Q133 37 124 37H121" fill="none" stroke="#5a5a5a" stroke-width="1.8"/><path d="M120 37L125 32.5V41.5Z" fill="#5a5a5a"/><path d="M160.5 45Q160 37 169 37H172" fill="none" stroke="#9a9a9a" stroke-width="1.8"/><path d="M173 37L168 32.5V41.5Z" fill="#9a9a9a"/><path d="M179 36h7l-3.5 4z" fill="#9a9a9a"/><path d="M1619.5 38.5L1627.5 46.5M1627.5 38.5L1619.5 46.5" stroke="#555" stroke-width="1.2"/><path d="M1653.5 34V47M1647 40.5H1660" stroke="#707070" stroke-width="2.6"/><rect x="875.5" y="39" width="11.5" height="9" rx="1" fill="#6e6e6e"/><path d="M878 39V36.5Q878 33.5 881.2 33.5Q884.5 33.5 884.5 36.5V39" fill="none" stroke="#6e6e6e" stroke-width="1.6"/><path d="M877.5 41.5H885M877.5 43.5H885M877.5 45.5H885" stroke="#f1f1f1" stroke-width="0.7"/><path d="M1679 31H1687.5L1690 34V42L1685 47H1679Z" fill="#666"/><path d="M1687 46L1694.5 38.5L1696.5 40.5L1689 48H1687Z" fill="#666" stroke="#cbcbcb" stroke-width="0.8"/><circle cx="1772" cy="39" r="7.6" fill="none" stroke="#666" stroke-width="0.9"/><circle cx="1772" cy="39" r="6.2" fill="#666"/><circle cx="1772" cy="39" r="4.8" fill="#cbcbcb"/><path d="M1771.5 35.5V39.5H1775" fill="none" stroke="#666" stroke-width="1.2"/><path d="M1814.5 46Q1816.5 44 1816.5 38Q1816.5 32.5 1821.5 32Q1826.5 32.5 1826.5 38Q1826.5 44 1828.5 46Z" fill="#666"/><path d="M1819.5 47.2Q1821.5 49.5 1823.5 47.2" fill="#666"/><circle cx="1825.5" cy="35" r="2.8" fill="#0696d7"/><circle cx="1854" cy="39" r="8" fill="#666"/><path d="M1851 36.5Q1851 33.5 1854 33.5Q1857.2 33.5 1857.2 36.3Q1857.2 38 1855 39.2Q1854 39.8 1854 41.5" fill="none" stroke="#fff" stroke-width="1.9"/><circle cx="1854" cy="44" r="1.2" fill="#fff"/></svg><svg style="left:0;top:0" width="1" height="1"><defs><linearGradient id="trg" x1="0" x2="1" y1="0" y2="1"><stop offset="0" stop-color="#f4f4f4"/><stop offset="1" stop-color="#555"/></linearGradient></defs><path d="M21 186.5L31.5 175.5V186.5Z" fill="url(#trg)" stroke="#222" stroke-width="0.9"/><path d="M43 181Q51 173.5 59 181Q51 188.5 43 181Z" fill="#8a8a8a"/><circle cx="51" cy="181" r="3.2" fill="#f0f0f0"/><circle cx="51" cy="181" r="1.9" fill="#8a8a8a"/><path d="M61 253Q69 245.5 77 253Q69 260.5 61 253Z" fill="none" stroke="#aaa" stroke-width="0.9"/><circle cx="69" cy="253" r="2.8" fill="none" stroke="#aaa" stroke-width="0.9"/><path d="M63 248L75 258" stroke="#aaa" stroke-width="1"/><path d="M61 277Q69 269.5 77 277Q69 284.5 61 277Z" fill="#8a8a8a"/><circle cx="69" cy="277" r="3.2" fill="#f0f0f0"/><circle cx="69" cy="277" r="1.9" fill="#8a8a8a"/><path d="M68.4 176.9L72.5 173H83.5L79.7 176.9Z" fill="#f7f7f7"/><rect x="68.4" y="176.9" width="11.3" height="11.3" fill="#e3e6ea"/><path d="M79.7 176.9L83.5 173V184.5L79.7 188.2Z" fill="#c9c9c9"/><path d="M68.4 188.2V176.9L72.5 173H83.5V184.5L79.7 188.2Z" fill="none" stroke="#222" stroke-width="0.9" stroke-linejoin="round"/><circle cx="173.5" cy="181.5" r="6" fill="#fafafa" stroke="#222" stroke-width="1.1"/><circle cx="173.5" cy="181.5" r="2.2" fill="#222"/><path d="M40.5 199.5L48.5 205L40.5 210.5Z" fill="#e4e6ea" stroke="#222" stroke-width="1.1" stroke-linejoin="round"/><path d="M40.5 223.5L48.5 229L40.5 234.5Z" fill="#e4e6ea" stroke="#222" stroke-width="1.1" stroke-linejoin="round"/><path d="M40.5 247.5L48.5 253L40.5 258.5Z" fill="#e4e6ea" stroke="#222" stroke-width="1.1" stroke-linejoin="round"/><path d="M40.5 271.5L48.5 277L40.5 282.5Z" fill="#e4e6ea" stroke="#222" stroke-width="1.1" stroke-linejoin="round"/><g fill="#8a8a8a"><rect x="67" y="197.5" width="4" height="3.5" transform="rotate(0 69 205)"/><rect x="67" y="197.5" width="4" height="3.5" transform="rotate(45 69 205)"/><rect x="67" y="197.5" width="4" height="3.5" transform="rotate(90 69 205)"/><rect x="67" y="197.5" width="4" height="3.5" transform="rotate(135 69 205)"/><rect x="67" y="197.5" width="4" height="3.5" transform="rotate(180 69 205)"/><rect x="67" y="197.5" width="4" height="3.5" transform="rotate(225 69 205)"/><rect x="67" y="197.5" width="4" height="3.5" transform="rotate(270 69 205)"/><rect x="67" y="197.5" width="4" height="3.5" transform="rotate(315 69 205)"/><circle cx="69" cy="205" r="5.8"/></g><circle cx="69" cy="205" r="2.3" fill="#f0f0f0"/><path d="M61 222H67L68 223.5H77V234H61Z" fill="#8e8e8e"/><rect x="61" y="224.5" width="16" height="9.5" fill="#959595"/><path d="M86 246H92L93 247.5H102V258H86Z" fill="#8e8e8e"/><rect x="86" y="248.5" width="16" height="9.5" fill="#959595"/><path d="M86 270H92L93 271.5H102V282H86Z" fill="#8e8e8e"/><rect x="86" y="272.5" width="16" height="9.5" fill="#959595"/><path d="M83.5 285.5L86.5 281.5M88.8 285.5L91.8 281.5M94.1 285.5L97.1 281.5M99.4 285.5L102.4 281.5M104.7 285.5L107.7 281.5M110.0 285.5L113.0 281.5M115.3 285.5L118.3 281.5M120.6 285.5L123.6 281.5M125.9 285.5L128.9 281.5M131.2 285.5L134.2 281.5M136.5 285.5L139.5 281.5M141.8 285.5L144.8 281.5M147.1 285.5L150.1 281.5M152.4 285.5L155.4 281.5M157.7 285.5L160.7 281.5" stroke="#56709e" stroke-width="1.3"/></svg><svg style="left:0;top:0" width="1" height="1"><path d="M1755.2 295.8L1758 292.5H1767.5L1765 295.8Z" fill="#b9e0fb"/><rect x="1755.2" y="295.8" width="9.8" height="10.7" fill="#9fd3f8"/><path d="M1765 295.8L1767.5 292.5V303.5L1765 306.5Z" fill="#72b6e8"/><path d="M1755.2 306.5H1765L1767.5 303.5V306L1765 309H1755.2Z" fill="#e6e6e6"/><path d="M1769.6 305V294" stroke="#fff" stroke-width="1.2"/><path d="M1768 296L1769.6 292.5L1771.2 296Z" fill="#fff"/><path d="M1784 295L1787 292H1796L1793 295V306L1789 304L1784 307Z" fill="#67b0e5" stroke="#3e86c4" stroke-width="0.6"/><path d="M1793 295L1796 292V303L1793 306Z" fill="#4a95d2"/><path d="M1784 309L1789 306.5L1793 308.5L1796 306" fill="none" stroke="#aaa" stroke-width="1"/><path d="M1798.6 306V294" stroke="#222" stroke-width="1"/><path d="M1797 296L1798.6 292.5L1800.2 296Z" fill="#222"/><path d="M1759.5 323.5V336.5L1762.5 333.5L1765 338.5L1767 337.5L1764.5 332.5H1768.5Z" fill="#d9d9d9" stroke="#333" stroke-width="0.8" stroke-linejoin="round"/><path d="M1841.5 327.5L1849 335M1849 327.5L1841.5 335" stroke="#444" stroke-width="1.9"/><path d="M1758.3 353V368" stroke="#1a2a5a" stroke-width="1.6"/><path d="M1759 360.5H1765" stroke="#222" stroke-width="1"/><path d="M1764.5 358.3L1768 360.5L1764.5 362.7Z" fill="#222"/><path d="M1758.5 384L1770 387.5V394L1762 390.5Z" fill="#f2b07c" stroke="#d98c55" stroke-width="0.5"/><path d="M1756 398L1764 391" stroke="#555" stroke-width="1"/><path d="M1755.5 398.5L1756.5 394.5L1759.5 397.5Z" fill="#555"/><path d="M1755.7 413V428.5M1769.8 413V428.5" stroke="#1a2a5a" stroke-width="1.6"/><path d="M1757.5 421H1768" stroke="#222" stroke-width="0.9"/><path d="M1757 421L1760 419V423ZM1768.5 421L1765.5 419V423Z" fill="#222"/><path d="M1755.3 516V525.5Q1761.5 529.5 1767.7 525.5V516Z" fill="#dcdcdc" stroke="#555" stroke-width="0.7"/><ellipse cx="1761.5" cy="516" rx="6.2" ry="2.6" fill="#f2f2f2" stroke="#555" stroke-width="0.7"/><path d="M1767 507.5L1768 510.5L1771 509.5L1769 512L1771 514.5L1768 513.5L1767 516.5L1766 513.5L1763 514.5L1765 512L1763 509.5L1766 510.5Z" fill="#f5a300"/><rect x="1762" y="540.3" width="8" height="8" fill="#6ab0e4" stroke="#4a90cc" stroke-width="0.6"/><rect x="1759.2" y="546.5" width="13.5" height="7.3" fill="#6ab0e4" stroke="#4a90cc" stroke-width="0.6"/><path d="M1762 546.5V550H1770V546.5" fill="none" stroke="#4a90cc" stroke-width="0.6"/><rect x="1762.3" y="562.2" width="6.3" height="8.5" fill="#e8b0b5"/><path d="M1759.3 567V575.8H1772.7V567H1770V571H1762V567Z" fill="#6ab0e4" stroke="#4a90cc" stroke-width="0.6"/><rect x="1762" y="584.3" width="8" height="6" fill="#f0f0f0" stroke="#ccc" stroke-width="0.7"/><rect x="1759.3" y="589" width="13.4" height="8.6" fill="#f0f0f0" stroke="#ccc" stroke-width="0.7"/><rect x="1762" y="590" width="8" height="3.5" fill="#6ab0e4"/><path d="M1758.5 608.5V618.5Q1764.5 622 1770.5 618.5V608.5Z" fill="#e0e0e0" stroke="#555" stroke-width="0.7"/><ellipse cx="1764.5" cy="608.5" rx="6" ry="2.3" fill="#f2f2f2" stroke="#555" stroke-width="0.7"/><path d="M1769.5 604.5L1770.5 607.5L1773.5 606.5L1771.5 609L1773.5 611.5L1770.5 610.5L1769.5 613.5L1768.5 610.5L1765.5 611.5L1767.5 609L1765.5 606.5L1768.5 607.5Z" fill="#f5a300"/><path d="M1758.5 633L1761 630H1768L1771.5 633V640.5L1768.5 642.5H1758.5Z" fill="#e0e0e0" stroke="#555" stroke-width="0.7"/><path d="M1758.5 633H1768.5V642.5M1768.5 633L1771.5 630" fill="none" stroke="#555" stroke-width="0.7"/><path d="M1769.5 626.5L1770.5 629.5L1773.5 628.5L1771.5 631L1773.5 633.5L1770.5 632.5L1769.5 635.5L1768.5 632.5L1765.5 633.5L1767.5 631L1765.5 628.5L1768.5 629.5Z" fill="#f5a300"/><path d="M1669.5 268V278M1671.5 268V278" stroke="#555" stroke-width="0.8"/><circle cx="1682.5" cy="273.2" r="4.5" fill="#222"/><rect x="1679.8" y="272.5" width="5.4" height="1.4" fill="#fff"/><path d="M1900 269.5L1904.5 273L1900 276.5ZM1905 269.5L1909.5 273L1905 276.5Z" fill="#222"/></svg><svg style="left:0;top:0" width="1" height="1"><defs><radialGradient id="shd" cx="0.5" cy="0.5" r="0.5"><stop offset="0" stop-color="#000" stop-opacity="0.28"/><stop offset="1" stop-color="#000" stop-opacity="0"/></radialGradient><linearGradient id="vcf" x1="0" y1="0" x2="0" y2="1"><stop offset="0" stop-color="#f0f0f0"/><stop offset="1" stop-color="#dcdcdc"/></linearGradient><linearGradient id="vcr" x1="0" y1="0" x2="0" y2="1"><stop offset="0" stop-color="#e8e8e8"/><stop offset="1" stop-color="#d2d2d2"/></linearGradient></defs><ellipse cx="1858" cy="232" rx="40" ry="16" fill="url(#shd)"/><path d="M1856.4 164.7L1821.5 179.7L1856.4 199L1891.4 180.9Z" fill="#ededed" fill-opacity="0.85" stroke="#8a8a8a" stroke-width="0.7"/><path d="M1821.5 179.7L1856.4 199V240.5L1824 219.5Z" fill="url(#vcf)" fill-opacity="0.85" stroke="#8a8a8a" stroke-width="0.7"/><path d="M1856.4 199L1891.4 180.9L1887.7 219.5L1856.4 240.5Z" fill="url(#vcr)" fill-opacity="0.85" stroke="#8a8a8a" stroke-width="0.7"/><g font-family="Liberation Sans" font-size="8.5" fill="#8e8e92" text-anchor="middle" font-weight="bold"><text transform="matrix(0.907 0.42 -0.6 0.26 1857 182.5)" font-size="10">TOP</text><text transform="matrix(0.875 0.484 0.06 0.998 1839.5 214)">FRONT</text><text transform="matrix(0.888 -0.459 -0.06 0.998 1873.5 213.5)">RIGHT</text></g><path d="M1820.5 174L1824.5 219.5" stroke="#5a5aee" stroke-width="1.6"/><path d="M1824.5 219.5L1863 247" stroke="#e88080" stroke-width="2"/><path d="M1815.5 161.5H1822L1815.5 170.5H1822" fill="none" stroke="#7b7bff" stroke-width="1.4"/><path d="M1864.5 245.5L1870.5 255.5M1870.5 245.5L1864.5 255.5" stroke="#ff8a8a" stroke-width="1.4"/></svg><svg style="left:0;top:0" width="1" height="1"><path d="M852.5 973.5V960" stroke="#333" stroke-width="2.6"/><path d="M852.5 973.5V960" stroke="#fff" stroke-width="1.1"/><path d="M849.5 961.5L852.5 957.8L855.5 961.5Z" fill="#fff" stroke="#333" stroke-width="0.8"/><path d="M847 969.5Q843 967 845 965.5Q850 963 858 964.5Q861 966 859 968Q856 970 851 970.3" fill="none" stroke="#222" stroke-width="0.9"/><path d="M846.5 970L849.5 967.5V972.5Z" fill="#111"/><path d="M879 963L881.5 958.5L884 961L886 959L889.5 958.5V963" fill="#888" stroke="#555" stroke-width="0.6"/><rect x="877.7" y="963" width="15" height="10.5" rx="0.5" fill="#fff" stroke="#3a3a3a" stroke-width="1.1"/><rect x="880.7" y="966.3" width="9" height="4.3" fill="#b5bccc" stroke="#3a3a3a" stroke-width="0.9"/><path d="M906.5 973.5L903 967Q902.5 965.5 904 966L906.5 968V960.5Q906.5 959 908 959.5V966V958.5Q909.5 957 911 958.5V966V959Q912.5 958 914 959.5V966.5V961Q915.5 960 917 961.5V968Q917 972 914.5 974Z" fill="#eceef2" stroke="#333" stroke-width="0.9" stroke-linejoin="round"/><circle cx="933.7" cy="964.7" r="4.6" fill="#e4eff0" stroke="#333" stroke-width="1.1"/><path d="M937 968L940.5 971.5" stroke="#333" stroke-width="2.4" stroke-linecap="round"/><path d="M941 961H946.5M943.75 958V964.5M941 965.8H946.5" stroke="#333" stroke-width="0.9"/><rect x="955.5" y="958" width="15" height="15.5" fill="none" stroke="#333" stroke-width="0.9" stroke-dasharray="1.6 1.6"/><circle cx="961.5" cy="964" r="5.2" fill="#e4eff0" stroke="#333" stroke-width="1.1"/><path d="M965.5 968L969.5 972" stroke="#333" stroke-width="2.4" stroke-linecap="round"/><rect x="988.8" y="958.3" width="15" height="12" rx="1" fill="#fff" stroke="#333" stroke-width="0.9"/><rect x="990.5" y="960.3" width="11.5" height="8" rx="0.7" fill="#9ab8e0" stroke="#2a3f73" stroke-width="0.8"/><path d="M993 970.5L992.5 973H1000.5L1000 970.5" fill="#fff" stroke="#333" stroke-width="0.8"/><rect x="1019.5" y="958.3" width="15.5" height="15.5" rx="1" fill="#666" stroke="#333" stroke-width="0.8"/><rect x="1020.5" y="959.3" width="1.9" height="1.9" fill="#fff" opacity="1.0"/><rect x="1020.5" y="962.3" width="1.9" height="1.9" fill="#fff" opacity="0.88"/><rect x="1020.5" y="965.3" width="1.9" height="1.9" fill="#fff" opacity="0.76"/><rect x="1020.5" y="968.3" width="1.9" height="1.9" fill="#fff" opacity="0.64"/><rect x="1020.5" y="971.3" width="1.9" height="1.9" fill="#fff" opacity="0.52"/><rect x="1023.5" y="959.3" width="1.9" height="1.9" fill="#fff" opacity="1.0"/><rect x="1023.5" y="962.3" width="1.9" height="1.9" fill="#fff" opacity="0.88"/><rect x="1023.5" y="965.3" width="1.9" height="1.9" fill="#fff" opacity="0.76"/><rect x="1023.5" y="968.3" width="1.9" height="1.9" fill="#fff" opacity="0.64"/><rect x="1023.5" y="971.3" width="1.9" height="1.9" fill="#fff" opacity="0.52"/><rect x="1026.5" y="959.3" width="1.9" height="1.9" fill="#fff" opacity="1.0"/><rect x="1026.5" y="962.3" width="1.9" height="1.9" fill="#fff" opacity="0.88"/><rect x="1026.5" y="965.3" width="1.9" height="1.9" fill="#fff" opacity="0.76"/><rect x="1026.5" y="968.3" width="1.9" height="1.9" fill="#fff" opacity="0.64"/><rect x="1026.5" y="971.3" width="1.9" height="1.9" fill="#fff" opacity="0.52"/><rect x="1029.5" y="959.3" width="1.9" height="1.9" fill="#fff" opacity="1.0"/><rect x="1029.5" y="962.3" width="1.9" height="1.9" fill="#fff" opacity="0.88"/><rect x="1029.5" y="965.3" width="1.9" height="1.9" fill="#fff" opacity="0.76"/><rect x="1029.5" y="968.3" width="1.9" height="1.9" fill="#fff" opacity="0.64"/><rect x="1029.5" y="971.3" width="1.9" height="1.9" fill="#fff" opacity="0.52"/><rect x="1032.5" y="959.3" width="1.9" height="1.9" fill="#fff" opacity="1.0"/><rect x="1032.5" y="962.3" width="1.9" height="1.9" fill="#fff" opacity="0.88"/><rect x="1032.5" y="965.3" width="1.9" height="1.9" fill="#fff" opacity="0.76"/><rect x="1032.5" y="968.3" width="1.9" height="1.9" fill="#fff" opacity="0.64"/><rect x="1032.5" y="971.3" width="1.9" height="1.9" fill="#fff" opacity="0.52"/><rect x="1050.2" y="959" width="7" height="6" rx="0.8" fill="#a8c3e8" stroke="#2a3f73" stroke-width="0.9"/><rect x="1057.2" y="959" width="7" height="6" rx="0.8" fill="#a8c3e8" stroke="#2a3f73" stroke-width="0.9"/><rect x="1050.2" y="966" width="7" height="6" rx="0.8" fill="#a8c3e8" stroke="#2a3f73" stroke-width="0.9"/><rect x="1057.2" y="966" width="7" height="6" rx="0.8" fill="#a8c3e8" stroke="#2a3f73" stroke-width="0.9"/><path d="M865 964h6l-3 3.5z" fill="#222"/><path d="M976 964h6l-3 3.5z" fill="#222"/><path d="M1006.5 964h6l-3 3.5z" fill="#222"/><path d="M1037 964h6l-3 3.5z" fill="#222"/><path d="M1067.5 964h6l-3 3.5z" fill="#222"/></svg><svg style="left:0;top:0" width="1" height="1"><rect x="0" y="983" width="134" height="1.2" fill="#c6c6c6"/><g fill="#4a4a4a"><rect x="11" y="1001" width="1.6" height="14"/><path d="M23 1001.5V1014.5L13 1008Z"/><path d="M35.5 1008L43 1002V1014Z"/><rect x="46" y="1005.5" width="1.6" height="5"/><path d="M61 1001V1015L72.5 1008Z"/><rect x="85" y="1005.5" width="1.6" height="5"/><path d="M89 1002V1014L97 1008Z"/><path d="M111 1001.5V1014.5L121 1008Z"/><rect x="121.5" y="1001" width="1.6" height="14"/></g><path d="M146 1001.5V1012.5Q154 1016.5 162 1012.5V1001.5Z" fill="#64aee6"/><ellipse cx="154" cy="1001.5" rx="8" ry="2.5" fill="#8ccaf6"/><path d="M170 1001.5V1012.5Q178 1016.5 186 1012.5V1001.5Z" fill="#64aee6"/><ellipse cx="178" cy="1001.5" rx="8" ry="2.5" fill="#8ccaf6"/><path d="M194.5 1000L196.5 998H206L204 1000Z" fill="#8ccaf6"/><rect x="194.5" y="1000" width="9.5" height="11" fill="#64aee6"/><path d="M204 1000L206 998V1009L204 1011Z" fill="#3e8ccb"/><path d="M194.5 1011H204L206 1009V1011L204 1013H194.5Z" fill="#d0d0d0"/><path d="M208 1011V1001" stroke="#333" stroke-width="0.8"/><path d="M206.7 1002.5L208 999.5L209.3 1002.5Z" fill="#333"/><path d="M154.5 1018V1024.5H202.5V1018M178.5 1018V1024.5" fill="none" stroke="#c4c4c4" stroke-width="1.3"/><path d="M194 995L197 991.5M198.5 995L201.5 991.5M203 995L206 991.5" stroke="#333" stroke-width="1.3"/><path d="M208 993.5H220L214 1000Z" fill="#5a5a5a"/><rect x="213.2" y="996" width="1.6" height="29" fill="#5a5a5a"/><g fill="#7a7a7a"><rect x="1897.5" y="1000" width="3" height="3" transform="rotate(0 1899 1008)"/><rect x="1897.5" y="1000" width="3" height="3" transform="rotate(45 1899 1008)"/><rect x="1897.5" y="1000" width="3" height="3" transform="rotate(90 1899 1008)"/><rect x="1897.5" y="1000" width="3" height="3" transform="rotate(135 1899 1008)"/><rect x="1897.5" y="1000" width="3" height="3" transform="rotate(180 1899 1008)"/><rect x="1897.5" y="1000" width="3" height="3" transform="rotate(225 1899 1008)"/><rect x="1897.5" y="1000" width="3" height="3" transform="rotate(270 1899 1008)"/><rect x="1897.5" y="1000" width="3" height="3" transform="rotate(315 1899 1008)"/><circle cx="1899" cy="1008" r="5.5"/></g><circle cx="1899" cy="1008" r="2.2" fill="#f0f0f0"/></svg><svg style="left:0;top:0" width="1" height="1"><defs><linearGradient id="win" x1="0" y1="0" x2="1" y2="1"><stop offset="0" stop-color="#6fd6ff"/><stop offset="1" stop-color="#0a84d8"/></linearGradient><linearGradient id="fold" x1="0" y1="0" x2="0" y2="1"><stop offset="0" stop-color="#ffd75e"/><stop offset="1" stop-color="#f2b530"/></linearGradient><linearGradient id="fus" x1="0" y1="0" x2="1" y2="1"><stop offset="0" stop-color="#fbe3cc"/><stop offset="1" stop-color="#f3c9a2"/></linearGradient></defs><rect x="597" y="1045" width="11" height="11" rx="0.8" fill="url(#win)"/><rect x="609" y="1045" width="11" height="11" rx="0.8" fill="url(#win)"/><rect x="597" y="1057" width="11" height="11" rx="0.8" fill="url(#win)"/><rect x="609" y="1057" width="11" height="11" rx="0.8" fill="url(#win)"/><circle cx="655" cy="1054" r="7.2" fill="none" stroke="#d8d8d8" stroke-width="2.6"/><path d="M649.5 1059.5L644 1065.5" stroke="#d8d8d8" stroke-width="3" stroke-linecap="round"/><rect x="691" y="1045" width="18" height="16" rx="1.5" fill="#f0f0f0"/><rect x="685" y="1051.5" width="18" height="15.5" rx="1.5" fill="#6a6a6a" fill-opacity="0.92"/><rect x="729" y="1045" width="24" height="22" rx="1" fill="#1f73d1"/><rect x="731" y="1047" width="8.5" height="18" fill="#f2f7fc"/><rect x="741.5" y="1047" width="9.5" height="10" fill="#6cc8f8"/><rect x="741.5" y="1058.5" width="9.5" height="6.5" fill="#2aa0ee"/><circle cx="784.5" cy="1055.5" r="11.5" fill="#7b6fd6"/><path d="M774 1067L776 1061L780 1064Z" fill="#7b6fd6"/><rect x="778.5" y="1051" width="9.5" height="9" rx="1.5" fill="#fff"/><path d="M788 1054L792 1051.5V1059.5L788 1057Z" fill="#fff"/><path d="M817 1047Q817 1045 819 1045H826L828.5 1047.5H841V1067H817Z" fill="#e8a825"/><rect x="817" y="1049.5" width="24" height="17.5" rx="1" fill="url(#fold)"/><rect x="823" y="1060" width="12" height="5" rx="1" fill="#2878c8"/><rect x="826" y="1072" width="6" height="3" rx="1.5" fill="#9d9d9d"/><rect x="870" y="1072" width="6" height="3" rx="1.5" fill="#9d9d9d"/><rect x="1046" y="1072" width="6" height="3" rx="1.5" fill="#9d9d9d"/><rect x="1310" y="1072" width="6" height="3" rx="1.5" fill="#9d9d9d"/><circle cx="873" cy="1055.5" r="11" fill="#fff"/><circle cx="873" cy="1055.5" r="9.3" fill="#3fc351"/><path d="M863 1067L864.5 1061.5L868 1064Z" fill="#fff"/><path d="M869 1051Q868 1054 871.5 1058Q875 1061 877.5 1060L876.5 1057.5L874.5 1058Q872 1056.5 871 1054L872 1052.5Z" fill="#fff"/><circle cx="881.5" cy="1048.5" r="7.2" fill="#e81123"/></svg><div class="t" style="left:879.19px;top:1042.45px;font-size:11.63px;font-weight:700;color:#fff;transform:scaleX(0.702);">1</div><svg style="left:0;top:0" width="1" height="1"><defs><linearGradient id="edg" x1="0" y1="0" x2="1" y2="0.6"><stop offset="0" stop-color="#28b0f0"/><stop offset="0.55" stop-color="#2fc7c0"/><stop offset="1" stop-color="#6be34e"/></linearGradient><linearGradient id="edb" x1="0" y1="0" x2="0.6" y2="1"><stop offset="0" stop-color="#1a8fe0"/><stop offset="1" stop-color="#0b5cb0"/></linearGradient></defs><circle cx="917" cy="1055.7" r="12.2" fill="url(#edg)"/><path d="M905 1056Q905 1046 914 1046.5Q920 1047 921 1051Q916 1049 913 1053Q911 1058 915 1062Q919 1064.5 926 1061.5Q922 1068 915 1068Q905 1067 905 1056Z" fill="url(#edb)"/><path d="M913.5 1055Q914 1053 917 1053.2Q919.5 1054 918.6 1057Q917.8 1059.6 922 1060.2Q917 1061.8 914.5 1059Q913 1057 913.5 1055Z" fill="#1f1f1f"/><rect x="949.3" y="1046.3" width="21.7" height="18.5" fill="#000" stroke="#9a9a9a" stroke-width="0.9"/><rect x="949.8" y="1046.8" width="20.7" height="2" fill="#d9d9d9"/><path d="M950 1050H968V1053Q960 1053 955 1055Q951 1056 950 1058Z" fill="#333" opacity="0.6"/><path d="M953.5 1051.2Q952 1051.2 952 1052.8Q952 1054.5 953.5 1054.5M955.6 1051.8V1052.4M955.6 1053.8V1054.3M957 1051.2L959 1054.5M962 1054.5H968" fill="none" stroke="#eee" stroke-width="0.9"/><rect x="993" y="1044" width="24" height="24" rx="3" fill="#f27223"/><path d="M999 1050Q1002 1047 1005 1050Q1008 1047 1011 1050Q1013 1053 1010.5 1056Q1013 1059 1011 1062Q1008 1065 1005 1062Q1002 1065 999 1062Q997 1059 999.5 1056Q997 1053 999 1050Z" fill="none" stroke="#fff" stroke-width="2.3"/><circle cx="1049" cy="1056" r="11.5" fill="#db4437"/><path d="M1049 1056L1038.5 1052Q1037 1058 1040 1062.5L1044 1068Q1049 1069 1053 1066Z" fill="#0f9d58"/><path d="M1049 1056L1053 1066Q1060 1063 1060.5 1056Q1060.5 1050 1058 1047.5L1049 1050Z" fill="#ffcd40"/><circle cx="1049" cy="1056" r="5.3" fill="#fff"/><circle cx="1049" cy="1056" r="4.2" fill="#4285f4"/><circle cx="1093" cy="1056" r="12" fill="#40a070"/><circle cx="1093" cy="1056" r="10.5" fill="#5fb98a"/><g fill="none" stroke="#e8f6ee" stroke-width="1"><ellipse cx="1093" cy="1056" rx="8" ry="3"/><ellipse cx="1093" cy="1056" rx="8" ry="3" transform="rotate(60 1093 1056)"/><ellipse cx="1093" cy="1056" rx="8" ry="3" transform="rotate(-60 1093 1056)"/></g><circle cx="1093" cy="1056" r="1.5" fill="#fff"/><path d="M1137.5 1044L1148 1049.5L1137 1055.5L1126 1050.5Z" fill="#3a6cc8"/><path d="M1126 1050.5L1137 1055.5V1067.5L1126 1062Z" fill="#1f6ff0"/><path d="M1137 1055.5L1148 1049.5V1061.5L1137 1067.5Z" fill="#4f95ff"/><path d="M1131.5 1047.3L1143 1052.5M1143 1047L1131.5 1053M1126 1056.3L1137 1061.5L1148 1055.5M1131.5 1053V1065M1142.5 1052.5V1064.5" fill="none" stroke="#163a80" stroke-width="0.6"/><path d="M1137 1049L1142.5 1051.5V1058L1137 1060.5L1132 1058V1051.5Z" fill="#f7a040"/><path d="M1132 1051.5L1137 1054L1142.5 1051.5M1137 1054V1060.5" fill="none" stroke="#8a5a20" stroke-width="0.5"/><path d="M1137 1054L1142.5 1051.5V1058L1137 1060.5Z" fill="#ffc27a"/><circle cx="1181" cy="1056" r="11.2" fill="#f6f6f6"/><g stroke-linecap="round" stroke-width="2.4"><path d="M1173.8 1053.3H1178.3" stroke="#36c5f0"/><path d="M1178.3 1049.6V1049.8" stroke="#36c5f0"/><path d="M1183 1049V1053.8" stroke="#2eb67d"/><path d="M1187.3 1053.1H1187.5" stroke="#2eb67d"/><path d="M1178.3 1058V1062.8" stroke="#e01e5a"/><path d="M1174.5 1058.3H1174.7" stroke="#e01e5a"/><path d="M1183.3 1058.2H1187.8" stroke="#ecb22e"/><path d="M1183.3 1062V1062.2" stroke="#ecb22e"/></g><defs><linearGradient id="ink" x1="0" y1="0" x2="1" y2="0.5"><stop offset="0" stop-color="#ffffff"/><stop offset="0.5" stop-color="#b8c8dc"/><stop offset="1" stop-color="#4f86c8"/></linearGradient></defs><path d="M1224.5 1045L1235.5 1056L1231 1058L1229 1066L1225 1061L1220 1063L1214.5 1055Z" fill="url(#ink)"/><path d="M1221 1055Q1222 1051 1226 1052Q1229 1054 1228 1058L1231 1061Q1227 1061 1226 1063Q1223 1060 1219 1061Q1221 1058 1221 1055Z" fill="#000"/><circle cx="1233" cy="1062" r="0.8" fill="#111"/><rect x="1249.5" y="1036" width="39" height="40" rx="4" fill="#2d2d2d"/><rect x="1288" y="1037" width="4" height="38" rx="2" fill="#272727"/><rect x="1256.7" y="1043.8" width="24.4" height="24.4" fill="url(#fus)"/><path d="M1263 1047H1275L1273 1051H1267.5V1054.5H1272L1270.5 1058H1267.5V1064.5H1263Z" fill="#dd8230"/><rect x="1271" y="1063.5" width="6" height="2" fill="#eeb07a"/><rect x="1260.8" y="1072.3" width="16.2" height="2.8" rx="1.4" fill="#4cc2ff"/><g fill="#8e9aa6"><rect x="1310" y="1043.5" width="6" height="5" rx="1" transform="rotate(0 1313 1056)"/><rect x="1310" y="1043.5" width="6" height="5" rx="1" transform="rotate(45 1313 1056)"/><rect x="1310" y="1043.5" width="6" height="5" rx="1" transform="rotate(90 1313 1056)"/><rect x="1310" y="1043.5" width="6" height="5" rx="1" transform="rotate(135 1313 1056)"/><rect x="1310" y="1043.5" width="6" height="5" rx="1" transform="rotate(180 1313 1056)"/><rect x="1310" y="1043.5" width="6" height="5" rx="1" transform="rotate(225 1313 1056)"/><rect x="1310" y="1043.5" width="6" height="5" rx="1" transform="rotate(270 1313 1056)"/><rect x="1310" y="1043.5" width="6" height="5" rx="1" transform="rotate(315 1313 1056)"/><circle cx="1313" cy="1056" r="9"/></g><circle cx="1313" cy="1056" r="5.5" fill="#20242a"/><circle cx="1313" cy="1056" r="4.5" fill="#2b7de0"/><path d="M1640 1058.5L1646 1052.5L1652 1058.5" fill="none" stroke="#f0f0f0" stroke-width="1.1"/><path d="M1671 1055Q1671 1048 1678 1048Q1683 1048 1685 1052M1685 1049V1052.5H1681.5M1673 1062V1059H1676M1673 1059Q1675 1063 1679 1063" fill="none" stroke="#f0f0f0" stroke-width="1"/><circle cx="1682.5" cy="1060" r="3.6" fill="#f7a000"/><path d="M1746 1054Q1754 1046 1762 1054M1748.5 1056.5Q1754 1051 1759.5 1056.5M1751 1059Q1754 1056 1757 1059" fill="none" stroke="#f0f0f0" stroke-width="1.3"/><circle cx="1754" cy="1061" r="1.2" fill="#f0f0f0"/><path d="M1770 1052.5H1773.5L1777.5 1049V1061.5L1773.5 1058H1770Z" fill="none" stroke="#f0f0f0" stroke-width="1"/><path d="M1780 1052.5Q1782 1055 1780 1058M1782.5 1050.5Q1785.5 1055 1782.5 1060" fill="none" stroke="#f0f0f0" stroke-width="1"/><path d="M1785 1049Q1789 1055 1785 1061" fill="none" stroke="#777" stroke-width="0.8"/><rect x="1797" y="1050.5" width="12" height="9" rx="1.3" fill="none" stroke="#f0f0f0" stroke-width="1.1"/><rect x="1809.5" y="1053" width="1.6" height="4" fill="#f0f0f0"/><rect x="1799" y="1053" width="4" height="5" fill="#f0f0f0"/><path d="M1794 1049V1052M1797 1049V1052M1793 1052H1798V1054Q1795.5 1056 1793 1054ZM1795.5 1056V1062" fill="none" stroke="#f0f0f0" stroke-width="1"/><circle cx="1892" cy="1056" r="8" fill="#4cc2ff"/></svg><div class="t" style="left:1888.32px;top:1049.84px;font-size:12.35px;font-weight:400;color:#111;transform:scaleX(1.068);">7</div><svg style="left:0;top:0" width="1" height="1"><rect x="757.9" y="150.1" width="12" height="9.8" fill="#e02020"/><path d="M760.7 150.5V148.5Q760.7 145.8 763.9 145.8Q767.1 145.8 767.1 148.5V150.5" fill="none" stroke="#e02020" stroke-width="2.3"/><rect x="763.3" y="153.5" width="1.4" height="3" fill="#f4a0a0"/></svg></body></html>
